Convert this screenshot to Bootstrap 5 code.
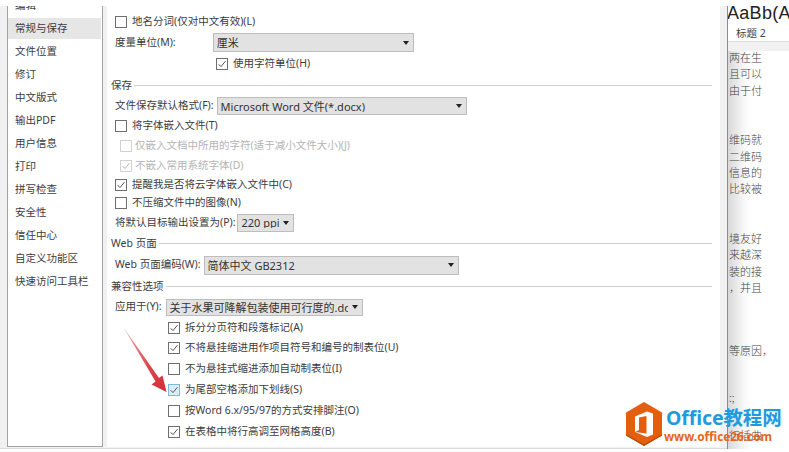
<!DOCTYPE html>
<html lang="zh">
<head>
<meta charset="utf-8">
<title>选项</title>
<link href="https://cdn.jsdelivr.net/npm/bootstrap@5.3.0/dist/css/bootstrap.min.css" rel="stylesheet">
<style>
html,body{width:789px;height:452px;overflow:hidden;background:#fff}
body{font-family:"Noto Sans","Noto Sans CJK SC",sans-serif;font-size:10.5px;color:#3c3c3c;position:relative;padding-top:6px}
.stage{height:443px}
.dlg{width:727px;padding-left:7px;background:#f1f1f1;border-bottom:1px solid #dcdcdc}
.side{width:96px;background:#fff;border:1px solid #a3a3a3;border-top:0;border-bottom:1px solid #a3a3a3;overflow:hidden;margin-right:4px;margin-bottom:1px}
.side .list-group-item{border:0;padding:0 0 0 7px;height:23px;line-height:23px;background:transparent;color:#3c3c3c;font-size:10.5px;border-radius:0}
.side .list-group-item.active{background:#e6e6e6;height:21px;line-height:21px;margin:1px 1px 1px 0;color:#3c3c3c}
.side .list-group{margin-top:-12px;border-radius:0}
.pane{width:613px;background:#fff;padding:5px 4px 0;margin-bottom:1px}
.rw{display:flex;align-items:center;padding-left:4px;white-space:nowrap}
.h18{height:18px}.h19{height:19px}.h20{height:20px}.h21{height:21px}.h22{height:22px}
.hdr{display:flex;align-items:center;padding-left:0;white-space:nowrap}
.hdr::after{content:"";flex:1;height:1px;background:#cfcfcf;margin:0 4px 0 2px}
.pane .form-check-input{width:12px;height:12px;margin:0 5px 0 0;border:1px solid #6e6e6e;border-radius:0;flex:none;background-color:#fff;box-shadow:none;background-size:10px 10px}
.pane .form-check-input:checked{background-color:#fff;border-color:#6e6e6e;background-image:url("data:image/svg+xml,%3Csvg xmlns='http://www.w3.org/2000/svg' viewBox='0 0 10 10'%3E%3Cpath d='M1.6 5.2 4 7.6 8.4 2.2' fill='none' stroke='%23555' stroke-width='1'/%3E%3C/svg%3E")}
.pane .form-check-input:disabled{opacity:1;border-color:#d2d2d2;background-color:#fff}
.pane .form-check-input.hot{background-color:#d9eefb;border-color:#7fb8dd}
.rw.off{color:#b4b4b4;padding-left:9px}
.rw.off .form-check-input{margin-right:3px}
.rw.off .form-check-input:checked{background-image:url("data:image/svg+xml,%3Csvg xmlns='http://www.w3.org/2000/svg' viewBox='0 0 10 10'%3E%3Cpath d='M1.6 5.2 4 7.6 8.4 2.2' fill='none' stroke='%23b4b4b4' stroke-width='1'/%3E%3C/svg%3E")}
.pane .form-select{font-size:11px;line-height:1;padding:0 14px 0 3px;border:1px solid #bdbdbd;border-radius:0;background-color:#e2e2e2;color:#333;box-shadow:none;background-size:6px 4px;background-position:right 4px center;font-family:inherit;background-image:url("data:image/svg+xml,%3Csvg xmlns='http://www.w3.org/2000/svg' viewBox='0 0 6 4'%3E%3Cpath d='M0 0h6L3 4z' fill='%23222'/%3E%3C/svg%3E")}
.sel-unit{width:201px;height:19px;margin-left:37px}
.sel-fmt{width:250px;height:18px;margin-left:3px}
.sel-ppi{width:57px;height:18px;margin-left:2px}
.sel-web{width:255px;height:19px;margin-left:3px}
.sel-doc{width:197px;height:17px;margin-left:4px}
.in-unit{padding-left:105px}
.in-compat{padding-left:57px}
.doc{flex:1;background:linear-gradient(90deg,#d8d8d8 0,#f4f4f4 14px,#fff 22px);border-left:1px solid #8c8c8c;overflow:hidden;min-width:0}
.ribbon{height:36px;background:#fff;border-bottom:1px solid #dedede;white-space:nowrap;overflow:hidden}
.sample{font-family:"Liberation Sans",sans-serif;font-size:18px;line-height:14px;color:#222;margin-left:-1px;letter-spacing:.3px}
.tagname{font-size:10.5px;line-height:14px;margin:6px 0 0 8px;color:#444}
.ruler{height:9px;background:#f1f1f1}
.doctext{font-family:"Noto Sans CJK SC",sans-serif;font-size:11px;font-weight:300;color:#444;line-height:16.4px;white-space:nowrap;padding-left:1px;margin-top:-2px}
.gap-a{margin-top:33px}.gap-b{margin-top:33px}.gap-c{margin-top:47px}.gap-d{margin-top:30px}.gap-e{margin-top:22px}
.arrow{position:absolute;left:118px;top:322px}
.wm{position:absolute;left:625px;top:401px;width:160px;height:48px}
.wm-hex{position:absolute;left:0;top:0}
.wm-t1{position:absolute;left:41px;top:5px;font:700 19.5px/24px "Noto Sans","Noto Sans CJK SC",sans-serif;color:#1e9be0;white-space:nowrap;letter-spacing:-.1px}
.wm-t2{position:absolute;left:39px;top:27px;font:700 11.8px/16px "Noto Sans",sans-serif;color:#e8651a;white-space:nowrap}
</style>
</head>
<body>
<div class="d-flex stage">
  <div class="dlg d-flex">
    <nav class="side">
      <div class="list-group">
        <a class="list-group-item">编辑</a>
        <a class="list-group-item active">常规与保存</a>
        <a class="list-group-item">文件位置</a>
        <a class="list-group-item">修订</a>
        <a class="list-group-item">中文版式</a>
        <a class="list-group-item">输出PDF</a>
        <a class="list-group-item">用户信息</a>
        <a class="list-group-item">打印</a>
        <a class="list-group-item">拼写检查</a>
        <a class="list-group-item">安全性</a>
        <a class="list-group-item">信任中心</a>
        <a class="list-group-item">自定义功能区</a>
        <a class="list-group-item">快速访问工具栏</a>
      </div>
    </nav>
    <main class="pane">
      <div class="rw h21"><input class="form-check-input" type="checkbox">地名分词(仅对中文有效)(L)</div>
      <div class="rw h21">度量单位(M):<select class="form-select sel-unit"><option>厘米</option></select></div>
      <div class="rw h22 in-unit"><input class="form-check-input" type="checkbox" checked>使用字符单位(H)</div>
      <div class="hdr h21">保存</div>
      <div class="rw h20">文件保存默认格式(F):<select class="form-select sel-fmt"><option>Microsoft Word 文件(*.docx)</option></select></div>
      <div class="rw h20"><input class="form-check-input" type="checkbox">将字体嵌入文件(T)</div>
      <div class="rw h20 off"><input class="form-check-input" type="checkbox" disabled>仅嵌入文档中所用的字符(适于减小文件大小)(J)</div>
      <div class="rw h19 off"><input class="form-check-input" type="checkbox" checked disabled>不嵌入常用系统字体(D)</div>
      <div class="rw h19"><input class="form-check-input" type="checkbox" checked>提醒我是否将云字体嵌入文件中(C)</div>
      <div class="rw h18"><input class="form-check-input" type="checkbox">不压缩文件中的图像(N)</div>
      <div class="rw h21">将默认目标输出设置为(P):<select class="form-select sel-ppi"><option>220 ppi</option></select></div>
      <div class="hdr h21">Web 页面</div>
      <div class="rw h22">Web 页面编码(W):<select class="form-select sel-web"><option>简体中文 GB2312</option></select></div>
      <div class="hdr h21">兼容性选项</div>
      <div class="rw h20">应用于(Y):<select class="form-select sel-doc"><option>关于水果可降解包装使用可行度的.doc</option></select></div>
      <div class="rw h21 in-compat"><input class="form-check-input" type="checkbox" checked>拆分分页符和段落标记(A)</div>
      <div class="rw h20 in-compat"><input class="form-check-input" type="checkbox" checked>不将悬挂缩进用作项目符号和编号的制表位(U)</div>
      <div class="rw h21 in-compat"><input class="form-check-input" type="checkbox">不为悬挂式缩进添加自动制表位(I)</div>
      <div class="rw h21 in-compat"><input class="form-check-input hot" type="checkbox" checked>为尾部空格添加下划线(S)</div>
      <div class="rw h21 in-compat"><input class="form-check-input" type="checkbox">按Word 6.x/95/97的方式安排脚注(O)</div>
      <div class="rw h21 in-compat"><input class="form-check-input" type="checkbox" checked>在表格中将行高调至网格高度(B)</div>
    </main>
  </div>
  <section class="doc">
    <div class="ribbon">
      <div class="sample">AaBb(A</div>
      <div class="tagname">标题 2</div>
    </div>
    <div class="ruler"></div>
    <div class="doctext">
      <div>两在生</div><div>且可以</div><div>由于付</div>
      <div class="gap-a">维码就</div><div>二维码</div><div>信息的</div><div>比较被</div>
      <div class="gap-b">境友好</div><div>来越深</div><div>装的接</div><div>，并且</div>
      <div class="gap-c">等原因，</div>
      <div class="gap-d">:;</div>
      <div class="gap-e">行插曲</div>
    </div>
  </section>
</div>

<svg class="arrow" width="54" height="76" viewBox="0 0 54 76" aria-hidden="true">
  <defs><linearGradient id="ag" x1="0" y1="0" x2="1" y2="1"><stop offset="0" stop-color="#f0b6b6"/><stop offset=".55" stop-color="#dc4a50"/><stop offset="1" stop-color="#d42b38"/></linearGradient></defs>
  <path d="M5.500 5.500 41 56 44.500 53.500 48.500 70 33.500 62.500 37.500 59.500Z" fill="url(#ag)"/>
</svg>

<div class="wm">
  <svg class="wm-hex" width="38" height="46" viewBox="0 0 38 46" aria-hidden="true">
    <path d="M19 1 37 11.500V34.500L19 45 1 34.500V11.500Z" fill="#e35f0e"/>
    <path d="M19 45 37 34.500V33L19 43.500 1 33V34.500Z" fill="#b94a08"/>
    <path d="M10 15.500 22 10.500 28 12.500V33.500L22 36 10 31 21.500 32.500V15L14 16.500V29L10 31Z" fill="#fff"/>
  </svg>
  <div class="wm-t1">Office教程网</div>
  <div class="wm-t2">www.office26.com</div>
</div>
<script src="https://cdn.jsdelivr.net/npm/bootstrap@5.3.0/dist/js/bootstrap.bundle.min.js"></script>
</body>
</html>
